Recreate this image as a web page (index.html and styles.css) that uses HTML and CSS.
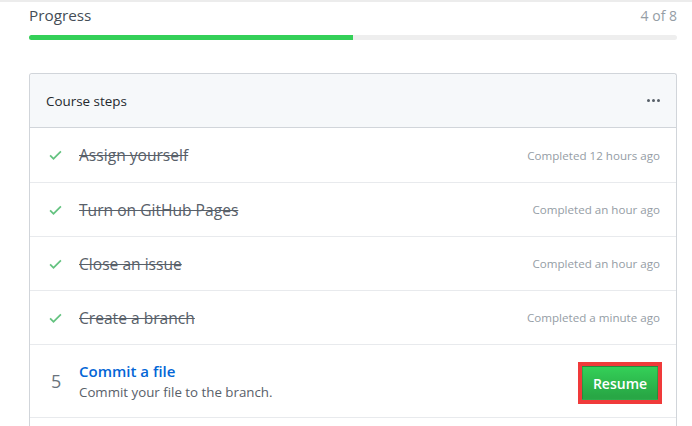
FILE: index.html
```html
<!DOCTYPE html>
<html>
<head>
<meta charset="utf-8">
<link rel="stylesheet" href="styles.css">
</head>
<body>
<div class="page">
  <div class="progress-head">
    <span class="progress-title">Progress</span>
    <span class="progress-count">4 of 8</span>
  </div>
  <div class="bar"><div class="bar-fill" style="width:50%"></div></div>

  <div class="card">
    <div class="card-head">
      <span class="card-title">Course steps</span>
      <svg class="kebab" width="13" height="16" viewBox="0 0 13 16"><path fill="currentColor" d="M1.5 9a1.5 1.5 0 1 0 0-3 1.5 1.5 0 0 0 0 3zm5 0a1.5 1.5 0 1 0 0-3 1.5 1.5 0 0 0 0 3zm5 0a1.5 1.5 0 1 0 0-3 1.5 1.5 0 0 0 0 3z"/></svg>
    </div>
    <div class="row">
      <svg class="check" width="15" height="16" viewBox="0 0 12 16"><path fill="currentColor" d="M12 5l-8 8-4-4 1.2-1.2L4 10.6l6.8-6.8L12 5z"/></svg>
      <span class="step done">Assign yourself</span>
      <span class="when">Completed 12 hours ago</span>
    </div>
    <div class="row">
      <svg class="check" width="15" height="16" viewBox="0 0 12 16"><path fill="currentColor" d="M12 5l-8 8-4-4 1.2-1.2L4 10.6l6.8-6.8L12 5z"/></svg>
      <span class="step done">Turn on GitHub Pages</span>
      <span class="when">Completed an hour ago</span>
    </div>
    <div class="row">
      <svg class="check" width="15" height="16" viewBox="0 0 12 16"><path fill="currentColor" d="M12 5l-8 8-4-4 1.2-1.2L4 10.6l6.8-6.8L12 5z"/></svg>
      <span class="step done">Close an issue</span>
      <span class="when">Completed an hour ago</span>
    </div>
    <div class="row">
      <svg class="check" width="15" height="16" viewBox="0 0 12 16"><path fill="currentColor" d="M12 5l-8 8-4-4 1.2-1.2L4 10.6l6.8-6.8L12 5z"/></svg>
      <span class="step done">Create a branch</span>
      <span class="when">Completed a minute ago</span>
    </div>
    <div class="row current">
      <span class="num">5</span>
      <div class="step-info">
        <a class="step-link">Commit a file</a>
        <span class="step-desc">Commit your file to the branch.</span>
      </div>
      <button class="resume">Resume</button>
    </div>
    <div class="row next"></div>
  </div>
</div>
</body>
</html>
```

FILE: styles.css
```css
html, body {
  margin: 0;
  padding: 0;
  background: #fff;
}
body {
  font-family: "Open Sans", "Noto Sans", sans-serif;
  color: #24292e;
  overflow: hidden;
}
.page {
  border-top: 2px solid #ececec;
  padding: 3px 15px 0 29px;
  height: 426px;
  box-sizing: border-box;
}
.progress-head {
  display: flex;
  justify-content: space-between;
  align-items: baseline;
  height: 27px;
}
.progress-title {
  font-size: 15.3px;
  color: #444d56;
}
.progress-count {
  font-size: 14px;
  color: #959da5;
}
.bar {
  margin-top: 3px;
  height: 5px;
  border-radius: 3px;
  background: #eeeeee;
  overflow: hidden;
}
.bar-fill {
  height: 100%;
  background: #34d058;
}
.card {
  margin-top: 33px;
  border: 1px solid #d1d5da;
  border-bottom: none;
  border-radius: 3px 3px 0 0;
}
.card-head {
  height: 53px;
  background: #f6f8fa;
  border-bottom: 1px solid #d1d5da;
  display: flex;
  align-items: center;
  justify-content: space-between;
  padding: 0 16px;
  border-radius: 3px 3px 0 0;
}
.card-title {
  font-size: 13.4px;
  color: #24292e;
}
.kebab {
  color: #586069;
}
.row {
  height: 53px;
  border-top: 1px solid #e8eaed;
  display: flex;
  align-items: center;
  padding: 0 16px 0 18px;
}
.card-head + .row {
  border-top: none;
  height: 54px;
}
.check {
  color: #63c27f;
  flex: none;
}
.step {
  margin-left: 16px;
  font-size: 15.6px;
  color: #586069;
  flex: 1;
}
.done {
  text-decoration: line-through;
}
.when {
  font-size: 11.6px;
  color: #959da5;
}
.row.current {
  height: 72px;
  padding-right: 18px;
}
.num {
  width: 28px;
  margin-left: 3px;
  font-size: 18px;
  color: #6a737d;
  flex: none;
}
.step-info {
  flex: 1;
  display: flex;
  flex-direction: column;
  margin-top: -1px;
}
.step-link {
  font-size: 15px;
  font-weight: 600;
  color: #0366d6;
  line-height: 22px;
}
.step-desc {
  font-size: 13.3px;
  color: #586069;
  line-height: 20px;
}
.resume {
  font-family: inherit;
  font-size: 14px;
  font-weight: 600;
  color: #fff;
  width: 76px;
  height: 34px;
  border: 1px solid rgba(27,31,35,0.2);
  border-radius: 0;
  background: linear-gradient(#34d058, #28a745 90%);
  outline: 4px solid #f03a3a;
  outline-offset: 0;
  margin-top: 4px;
}
.row.next {
  height: 20px;
}
```
